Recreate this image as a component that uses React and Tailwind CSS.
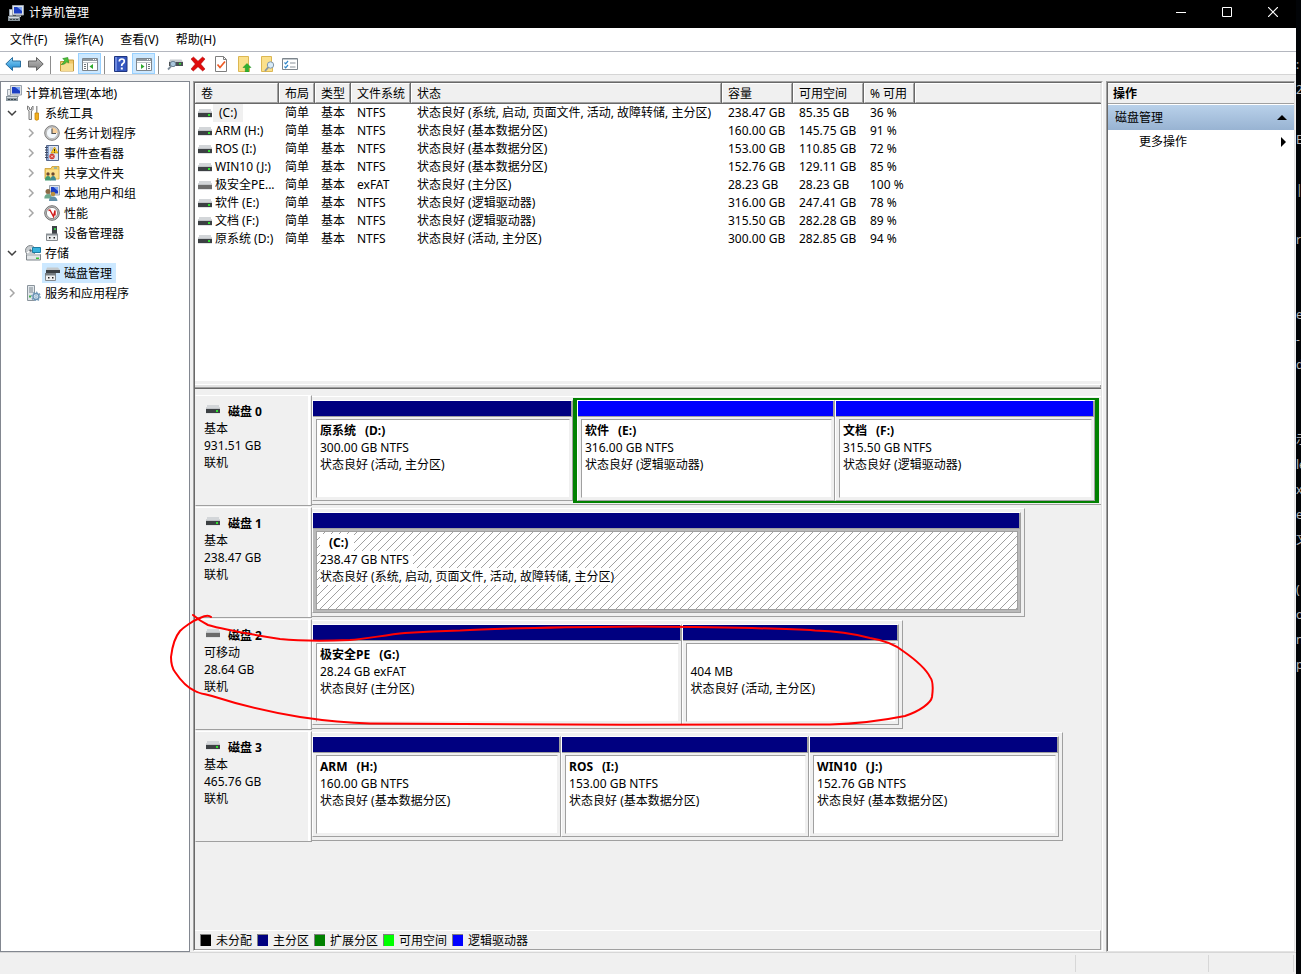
import { useState } from 'react';

const MENUS = ['文件(F)', '操作(A)', '查看(V)', '帮助(H)'];

const COLUMNS = [
  { label: '卷', width: 'w-[84px]' },
  { label: '布局', width: 'w-[36px]' },
  { label: '类型', width: 'w-[36px]' },
  { label: '文件系统', width: 'w-[60px]' },
  { label: '状态', width: 'w-[311px]' },
  { label: '容量', width: 'w-[71px]' },
  { label: '可用空间', width: 'w-[71px]' },
  { label: '% 可用', width: 'w-[51px]' },
];

const VOLUMES = [
  { name: '(C:)', fs: 'NTFS', status: '状态良好 (系统, 启动, 页面文件, 活动, 故障转储, 主分区)', size: '238.47 GB', free: '85.35 GB', pct: '36 %' },
  { name: 'ARM (H:)', fs: 'NTFS', status: '状态良好 (基本数据分区)', size: '160.00 GB', free: '145.75 GB', pct: '91 %' },
  { name: 'ROS (I:)', fs: 'NTFS', status: '状态良好 (基本数据分区)', size: '153.00 GB', free: '110.85 GB', pct: '72 %' },
  { name: 'WIN10 (J:)', fs: 'NTFS', status: '状态良好 (基本数据分区)', size: '152.76 GB', free: '129.11 GB', pct: '85 %' },
  { name: '极安全PE...', fs: 'exFAT', status: '状态良好 (主分区)', size: '28.23 GB', free: '28.23 GB', pct: '100 %', removable: true },
  { name: '软件 (E:)', fs: 'NTFS', status: '状态良好 (逻辑驱动器)', size: '316.00 GB', free: '247.41 GB', pct: '78 %' },
  { name: '文档 (F:)', fs: 'NTFS', status: '状态良好 (逻辑驱动器)', size: '315.50 GB', free: '282.28 GB', pct: '89 %' },
  { name: '原系统 (D:)', fs: 'NTFS', status: '状态良好 (活动, 主分区)', size: '300.00 GB', free: '282.85 GB', pct: '94 %' },
];

// share = relative width of a partition, width = width of the whole disk in %
const DISKS = [
  {
    name: '磁盘 0', type: '基本', size: '931.51 GB', width: 100,
    parts: [{ title: '原系统', letter: '(D:)', size: '300.00 GB NTFS', status: '状态良好 (活动, 主分区)', share: 261 }],
    extended: [
      { title: '软件', letter: '(E:)', size: '316.00 GB NTFS', status: '状态良好 (逻辑驱动器)', share: 258 },
      { title: '文档', letter: '(F:)', size: '315.50 GB NTFS', status: '状态良好 (逻辑驱动器)', share: 260 },
    ],
  },
  {
    name: '磁盘 1', type: '基本', size: '238.47 GB', width: 90.4,
    parts: [{ title: '', letter: '(C:)', size: '238.47 GB NTFS', status: '状态良好 (系统, 启动, 页面文件, 活动, 故障转储, 主分区)', share: 709, selected: true }],
  },
  {
    name: '磁盘 2', type: '可移动', size: '28.64 GB', width: 74.9, removable: true,
    parts: [
      { title: '极安全PE', letter: '(G:)', size: '28.24 GB exFAT', status: '状态良好 (主分区)', share: 371 },
      { title: '', letter: '', size: '404 MB', status: '状态良好 (活动, 主分区)', share: 216 },
    ],
  },
  {
    name: '磁盘 3', type: '基本', size: '465.76 GB', width: 95.2,
    parts: [
      { title: 'ARM', letter: '(H:)', size: '160.00 GB NTFS', status: '状态良好 (基本数据分区)', share: 249 },
      { title: 'ROS', letter: '(I:)', size: '153.00 GB NTFS', status: '状态良好 (基本数据分区)', share: 248 },
      { title: 'WIN10', letter: '(J:)', size: '152.76 GB NTFS', status: '状态良好 (基本数据分区)', share: 250 },
    ],
  },
];

const LEGEND = [
  { label: '未分配', color: 'bg-black' },
  { label: '主分区', color: 'bg-[#000080]' },
  { label: '扩展分区', color: 'bg-[#008000]' },
  { label: '可用空间', color: 'bg-[#00ff00]' },
  { label: '逻辑驱动器', color: 'bg-[#0000ff]' },
];

// Slice of the console window that sits behind this one
const BEHIND = [':', '2', '', 'E', '', '|', '', 'r', '', '', 'e', '-', 'd', '', '', '示', 'le', 'x', 'e', '文', '', '(', 'o', 'n', 'p'];

/* ---------- icons ---------- */

function Icon({ children, size = 16 }) {
  return (
    <svg width={size} height={size} viewBox="0 0 16 16" className="shrink-0" aria-hidden="true">
      {children}
    </svg>
  );
}

function ComputerIcon() {
  return (
    <Icon>
      <path d="M4.5 .5h11v9.500h-11z" fill="#dfe3e8" stroke="#9aa3ad" />
      <path d="M6 2h8v6.500H6z" fill="#1c3fc4" />
      <path d="M9 2h5v4z" fill="#7fa6f2" />
      <path d="M8 10.500h5V12H8z" fill="#b5bcc4" />
      <path d="M1.500 4.500h3v6h-3z" fill="#e9ecef" stroke="#9aa3ad" />
      <path d="M0 11h12v5H0z" fill="#8b979f" />
      <path d="M1 12h10v1H1z" fill="#d8dde1" />
      <path d="M2 14h2v1H2zM5 14h2v1H5zM8 14h2v1H8z" fill="#3b454c" />
    </Icon>
  );
}

function ToolsIcon() {
  return (
    <Icon>
      <path d="M2.500 1v3.500L4 6v8.500h2.500V6L8 4.500V1L6.500 2.500v2h-2v-2z" fill="#e6e6e6" stroke="#7d7d7d" />
      <path d="M11 1h1.500v7H11z" fill="#9b9b9b" />
      <path d="M10 8h3.500v6.500q-1.800 1.500-3.500 0z" fill="#f2b01e" stroke="#c98508" strokeWidth=".8" />
    </Icon>
  );
}

function ClockIcon() {
  return (
    <Icon>
      <circle cx="8" cy="8" r="7.300" fill="#c9c9c9" stroke="#7c7c7c" />
      <circle cx="8" cy="8" r="5.600" fill="#f3f8fc" stroke="#a5a5a5" strokeWidth=".6" />
      <path d="M8 8V2.400A5.600 5.600 0 0 1 13.600 8z" fill="#f7cf9a" />
      <path d="M8 3.500V8.500h4" fill="none" stroke="#555" strokeWidth="1.200" />
    </Icon>
  );
}

function EventIcon() {
  return (
    <Icon>
      <path d="M2.500 .5h12v15h-12z" fill="#8ea6cf" stroke="#56688c" />
      <path d="M5 1h9v14H5z" fill="#dfe6f4" />
      <path d="M6 9h3M6 11h3M6 13h4M6 3h3M6 5h3" stroke="#9fb0d0" />
      <path d="M1 2.500h3M1 5h3M1 7.500h3M1 10h3M1 12.500h3" stroke="#3f4a63" />
      <path d="M10.500 2l3.500 6H7z" fill="#ffcc22" stroke="#b88b00" strokeWidth=".6" />
      <path d="M10.500 4v2.200M10.500 6.800v.8" stroke="#222" />
      <circle cx="8" cy="11.500" r="2.700" fill="#d63a2f" />
      <path d="M7 10.500l2 2M9 10.500l-2 2" stroke="#fff" strokeWidth=".8" />
    </Icon>
  );
}

function SharedIcon() {
  return (
    <Icon>
      <path d="M1 3.500h6l1-2h7v12.500H1z" fill="#f4cf66" stroke="#c99a2e" strokeWidth=".8" />
      <path d="M2 5h12.500v8.500H2z" fill="#fbe08b" />
      <path d="M10 2.500h3v1h-3z" fill="#4d9fd6" />
      <circle cx="4" cy="9" r="1.700" fill="#6b4a30" />
      <circle cx="9" cy="9" r="1.700" fill="#6b4a30" />
      <path d="M1 15.500q0-4.500 3-4.500t3 4.500z" fill="#3f9a70" />
      <path d="M6.500 15.500q0-4.500 2.700-4.500t2.800 4.500z" fill="#3f8a90" />
    </Icon>
  );
}

function UsersIcon() {
  return (
    <Icon>
      <path d="M5.500 .5h10v9.500h-10z" fill="#dfe3e8" stroke="#9aa3ad" />
      <path d="M7 2h7v6.500H7z" fill="#1c3fc4" />
      <path d="M9.500 2H14v4z" fill="#7fa6f2" />
      <circle cx="4" cy="6.500" r="2.500" fill="#8b6a45" />
      <path d="M.3 13.500q0-4.500 3.700-4.500t4 4.500z" fill="#6fa98d" />
      <circle cx="9" cy="9" r="2.300" fill="#b98f3f" />
      <path d="M5 16q0-4.500 4-4.500t4.500 4.500z" fill="#5f8fa8" />
    </Icon>
  );
}

function PerfIcon() {
  return (
    <Icon>
      <circle cx="8" cy="8" r="7.300" fill="#c4c4c4" stroke="#6e6e6e" />
      <circle cx="8" cy="8" r="5.600" fill="#fff" stroke="#777" strokeWidth=".8" />
      <path d="M4.500 5.500L6 5l3.500 6.500L11 5.500v5" fill="none" stroke="#d01c1c" strokeWidth="1.400" />
    </Icon>
  );
}

function DeviceIcon() {
  return (
    <Icon>
      <path d="M8 1h5v8H8z" fill="#3e4347" />
      <path d="M10 3h2v2h-2z" fill="#38c44a" />
      <path d="M2.500 9.500h11v6h-11z" fill="#eceeef" stroke="#84898d" />
      <path d="M2 8.500h12v2H2z" fill="#8c9297" />
      <path d="M5 12h1.500v1.500H5zM9.500 12H11v1.500H9.500z" fill="#222" />
    </Icon>
  );
}

function StorageIcon() {
  return (
    <Icon>
      <circle cx="5.500" cy="5.500" r="5" fill="#c8cccf" stroke="#80868a" />
      <path d="M5.500 5.500L9 2M5.500 5.500L2 8" stroke="#fff" strokeWidth="1.500" />
      <circle cx="5.500" cy="5.500" r="1.200" fill="#5f666b" />
      <path d="M7.500 2.500h8v5h-8z" fill="#39b3dd" stroke="#1d7ca3" />
      <path d="M1.500 9.500h14v5.500h-14z" fill="#e3e6e8" stroke="#7d8489" />
      <path d="M2 9h13v2H2z" fill="#c3c8cb" />
      <path d="M11 12.500h3V14h-3z" fill="#3bc23b" />
    </Icon>
  );
}

function DiskMgmtIcon() {
  return (
    <Icon>
      <path d="M3 2.500h11l2 2.500H2z" fill="#c4c9cc" />
      <path d="M2 5h14v3H2z" fill="#3b4044" />
      <path d="M1.500 9.500h10v6h-10z" fill="#f0f1f2" stroke="#84898d" />
      <path d="M1 8h11v2.500H1z" fill="#777e83" />
      <path d="M4 12h1.500v1.500H4zM8 12h1.500v1.500H8z" fill="#222" />
    </Icon>
  );
}

function ServicesIcon() {
  return (
    <Icon>
      <path d="M2.500 .5h7v15h-7z" fill="#e2e7eb" stroke="#8a949c" />
      <path d="M4 3h4M4 5h4M4 7h4" stroke="#7b868f" />
      <path d="M4 10.500h2v2H4z" fill="#45b04c" />
      <circle cx="11" cy="11.500" r="3" fill="#d9e8f4" stroke="#6a93b4" strokeWidth="1.500" />
      <circle cx="11" cy="11.500" r="4.300" fill="none" stroke="#6a93b4" strokeWidth="1.200" strokeDasharray="1.500 1.800" />
      <circle cx="11" cy="11.500" r="1" fill="#fff" stroke="#6a93b4" strokeWidth=".6" />
    </Icon>
  );
}

function DriveIcon({ removable }) {
  return (
    <svg width="14" height="9" viewBox="0 0 14 9" className="shrink-0" shapeRendering="crispEdges" aria-hidden="true">
      <path d="M1 0h12l1 4H0z" fill="#d3d6d9" />
      <path d="M0 4h14v4H0z" fill={removable ? '#6b6b6b' : '#3c4043'} />
      <path d="M0 8h14v1H0z" fill="#e1e2e4" />
      <path d="M0 3h14v1H0z" fill="#c0c3c6" />
      {!removable && <path d="M10 5h2v2h-2z" fill="#2fe02f" />}
    </svg>
  );
}

function ArrowIcon({ flip, from, to, stroke }) {
  const id = flip ? 'arrow-next' : 'arrow-back';
  return (
    <Icon>
      <defs>
        <linearGradient id={id} x1="0" y1="0" x2="0" y2="1">
          <stop offset="0" stopColor={from} />
          <stop offset="1" stopColor={to} />
        </linearGradient>
      </defs>
      <path
        d="M.8 8L7.500 1.500V5h8v6h-8v3.500z"
        transform={flip ? 'matrix(-1 0 0 1 16 0)' : undefined}
        fill={`url(#${id})`}
        stroke={stroke}
        strokeLinejoin="round"
      />
    </Icon>
  );
}

function FolderUpIcon() {
  return (
    <Icon>
      <path d="M1.500 5.500h5l1-1.500h7v11h-13z" fill="#f0c766" stroke="#c49a3a" />
      <path d="M2 7.500h12V15H2z" fill="#f8dd92" />
      <path d="M4 10.500q3.500-1.500 3.500-5H9.800L6.500 1.200 2.500 4.500 5 5q.5 3-1 5.500z" transform="rotate(28 7 6)" fill="#4ec23c" stroke="#2f8f23" strokeWidth=".6" />
    </Icon>
  );
}

function PaneIcon({ right }) {
  return (
    <Icon>
      <path d="M.5 2.500h15v12H.5z" fill="#fff" stroke="#7d858c" />
      <path d="M1 3h14v2H1z" fill="#8f979e" />
      <path d="M11 3.500h1M13 3.500h1" stroke="#fff" />
      <path d="M1 6.500h14" stroke="#c2c8cd" />
      <path d={right ? 'M10.500 7v7' : 'M5.500 7v7'} stroke="#7d858c" />
      <path d={right ? 'M12 8.500h2M12 10.500h2M12 12.500h2' : 'M2 8.500h2M2 10.500h2M2 12.500h2'} stroke="#6c757c" />
      <path d={right ? 'M5 8l3.500 2.500L5 13z' : 'M11 8l-3.500 2.500L11 13z'} fill="#2eaa2e" />
    </Icon>
  );
}

function HelpIcon() {
  return (
    <Icon>
      <path d="M1.500 .5h12.500v15H1.500z" fill="#3557c0" stroke="#1e357f" />
      <path d="M2 1h2v14H2z" fill="#6f8be0" />
      <path d="M6.300 5.500q0-2.500 2.500-2.500t2.500 2.300q0 1.500-1.400 2.300T8.700 10" fill="none" stroke="#fff" strokeWidth="1.700" />
      <path d="M7.800 11.500h2v2h-2z" fill="#fff" />
    </Icon>
  );
}

function RescanIcon() {
  return (
    <Icon>
      <path d="M3 3.500h11.500L16 6H2z" fill="#c5cacd" />
      <path d="M2 6h14v4H2z" fill="#4a5054" />
      <path d="M12 7h2v1.500h-2z" fill="#2fe02f" />
      <circle cx="6" cy="8" r="2.700" fill="#a9c6dc" stroke="#6f8496" />
      <path d="M4.200 10.200L1 13.500" stroke="#7c8b98" strokeWidth="1.800" />
    </Icon>
  );
}

function DeleteIcon() {
  return (
    <Icon>
      <path d="M3.500 1L8 5.200 12.500 1 15 3 10.700 8 15 13l-2.300 2L8 10.700 3.300 15 1 13l4.300-5L1 3z" fill="#e00b0b" stroke="#a30000" strokeWidth=".5" />
    </Icon>
  );
}

function CheckDocIcon() {
  return (
    <Icon>
      <path d="M2.500 .5h8l3 3v12h-11z" fill="#fff" stroke="#7e7e7e" />
      <path d="M10.500 .5v3h3" fill="none" stroke="#7e7e7e" />
      <path d="M4.500 8.500l2.500 3 5-6" fill="none" stroke="#ee5a24" strokeWidth="1.700" />
    </Icon>
  );
}

function FolderNewIcon() {
  return (
    <Icon>
      <path d="M2.500 .5h10v10h1v5h-11z" fill="#fbe08b" stroke="#dcb752" />
      <path d="M11 7.500l4 4h-2.300V16H9.300v-4.500H7z" fill="#2fb22f" stroke="#1c8a1c" strokeWidth=".5" />
    </Icon>
  );
}

function FolderFindIcon() {
  return (
    <Icon>
      <path d="M2.500 .5h10v10h1v5h-11z" fill="#fbe08b" stroke="#dcb752" />
      <circle cx="11.500" cy="9" r="3.200" fill="#d8ebf8" stroke="#8296a6" />
      <path d="M9.200 11.300L6 15" stroke="#8a97a1" strokeWidth="1.800" />
    </Icon>
  );
}

function OptionsIcon() {
  return (
    <Icon>
      <path d="M.5 2.500h15v11H.5z" fill="#fff" stroke="#7d858c" />
      <path d="M1 3h14v1H1z" fill="#c2c8cd" />
      <path d="M2.500 6.500l1.200 1.300L6 5M2.500 10.500l1.200 1.300L6 9" fill="none" stroke="#2f86c9" strokeWidth="1.200" />
      <path d="M8 7h5.500M8 11h5.500" stroke="#8a9299" strokeWidth="1.200" />
    </Icon>
  );
}

function Chevron({ open }) {
  return (
    <svg width="10" height="10" viewBox="0 0 10 10" className="shrink-0" aria-hidden="true">
      <path
        d={open ? 'M1 3l4 4 4-4' : 'M3 1l4 4-4 4'}
        fill="none"
        stroke={open ? '#404040' : '#a6a6a6'}
        strokeWidth="1.500"
      />
    </svg>
  );
}

/* ---------- left tree ---------- */

const TREE = [
  { label: '任务计划程序', icon: ClockIcon, expandable: true },
  { label: '事件查看器', icon: EventIcon, expandable: true },
  { label: '共享文件夹', icon: SharedIcon, expandable: true },
  { label: '本地用户和组', icon: UsersIcon, expandable: true },
  { label: '性能', icon: PerfIcon, expandable: true },
  { label: '设备管理器', icon: DeviceIcon },
];

function TreeItem({ icon: Glyph, label, level, open, expandable, selected, onClick }) {
  return (
    <li className={`flex h-5 items-center ${level === 2 ? 'pl-[25px]' : level === 1 ? 'pl-[6px]' : 'pl-[5px]'}`}>
      {level > 0 && <span className="flex w-[18px] shrink-0">{expandable && <Chevron open={open} />}</span>}
      <button
        type="button"
        onClick={onClick}
        className={`flex h-5 items-center gap-1 pr-1 ${selected ? '-ml-0.5 bg-[#cce8ff] pl-0.5' : ''}`}
      >
        <Glyph />
        <span className="pt-px">{label}</span>
      </button>
    </li>
  );
}

function Sidebar({ selected, onSelect }) {
  return (
    <nav className="w-[190px] shrink-0 border border-[#828790] bg-white pt-px">
      <ul>
        <TreeItem level={0} icon={ComputerIcon} label="计算机管理(本地)" />
        <TreeItem level={1} icon={ToolsIcon} label="系统工具" open expandable />
        {TREE.map((t) => (
          <TreeItem key={t.label} level={2} {...t} selected={selected === t.label} onClick={() => onSelect(t.label)} />
        ))}
        <TreeItem level={1} icon={StorageIcon} label="存储" open expandable />
        <TreeItem
          level={2}
          icon={DiskMgmtIcon}
          label="磁盘管理"
          selected={selected === '磁盘管理'}
          onClick={() => onSelect('磁盘管理')}
        />
        <TreeItem level={1} icon={ServicesIcon} label="服务和应用程序" expandable />
      </ul>
    </nav>
  );
}

/* ---------- top bars ---------- */

function TitleBar() {
  const button = 'flex w-[46px] items-center justify-center';
  return (
    <header className="flex h-7 bg-black text-white">
      <div className="flex flex-1 items-center gap-[5px] pb-0.5 pl-2">
        <ComputerIcon />
        <h1>计算机管理</h1>
      </div>
      <div className="flex pb-1">
        <button type="button" className={button} aria-label="最小化">
          <svg width="10" height="10" viewBox="0 0 10 10"><path d="M0 5.500h10" stroke="#fff" /></svg>
        </button>
        <button type="button" className={button} aria-label="最大化">
          <svg width="10" height="10" viewBox="0 0 10 10"><path d="M.5 .5h9v9h-9z" fill="none" stroke="#fff" /></svg>
        </button>
        <button type="button" className={button} aria-label="关闭">
          <svg width="10" height="10" viewBox="0 0 10 10"><path d="M0 0l10 10M10 0L0 10" stroke="#fff" strokeWidth="1.200" /></svg>
        </button>
      </div>
    </header>
  );
}

function ToolButton({ label, active, children }) {
  return (
    <button
      type="button"
      aria-label={label}
      className={`flex h-[21px] w-[23px] items-center justify-center border ${
        active ? 'border-[#99d1ff] bg-[#cce8ff]' : 'border-transparent'
      }`}
    >
      {children}
    </button>
  );
}

function Separator() {
  return <span className="ml-[3px] mr-1 h-[18px] w-px bg-[#8d8d8d]" />;
}

function Toolbar() {
  return (
    <div className="flex h-[23px] items-end border-b border-[#d5d5d5] bg-white pl-px">
      <ToolButton label="后退"><ArrowIcon from="#8fd6f8" to="#1583cf" stroke="#2a6f9f" /></ToolButton>
      <ToolButton label="前进"><ArrowIcon flip from="#bdbdbd" to="#7f7f7f" stroke="#636363" /></ToolButton>
      <Separator />
      <ToolButton label="上移一级"><FolderUpIcon /></ToolButton>
      <ToolButton label="显示控制台树" active><PaneIcon /></ToolButton>
      <Separator />
      <ToolButton label="帮助"><HelpIcon /></ToolButton>
      <ToolButton label="显示操作窗格" active><PaneIcon right /></ToolButton>
      <Separator />
      <ToolButton label="重新扫描"><RescanIcon /></ToolButton>
      <ToolButton label="删除"><DeleteIcon /></ToolButton>
      <ToolButton label="属性"><CheckDocIcon /></ToolButton>
      <ToolButton label="打开"><FolderNewIcon /></ToolButton>
      <ToolButton label="浏览"><FolderFindIcon /></ToolButton>
      <ToolButton label="选项"><OptionsIcon /></ToolButton>
    </div>
  );
}

/* ---------- volume list ---------- */

function VolumeTable() {
  const head = 'h-[21px] border-b border-b-[#696969] bg-[#f0f0f0] p-0 text-left font-normal';
  return (
    <table className="w-full table-fixed border-separate border-spacing-0 whitespace-nowrap">
      <thead>
        <tr>
          {COLUMNS.map((c) => (
            <th key={c.label} className={`${head} ${c.width} border-r border-r-[#696969]`}>
              <div className="h-5 border border-b-[#a0a0a0] border-l-white border-r-[#a0a0a0] border-t-white pl-[5px] leading-5">
                {c.label}
              </div>
            </th>
          ))}
          <th className={head} aria-label="空">
            <div className="h-5 border border-b-[#a0a0a0] border-l-white border-r-[#e3e3e3] border-t-white" />
          </th>
        </tr>
      </thead>
      <tbody>
        {VOLUMES.map((v, i) => (
          <tr key={v.name} className="h-[18px] leading-[18px]">
            <td className="p-0">
              <div className="flex items-center pl-[3px]">
                <DriveIcon removable={v.removable} />
                <span className={i === 0 ? 'ml-px bg-[#f0f0f0] px-[6px]' : 'ml-[3px]'}>{v.name}</span>
              </div>
            </td>
            <td className="p-0 pl-[6px]">简单</td>
            <td className="p-0 pl-[6px]">基本</td>
            <td className="p-0 pl-[6px]">{v.fs}</td>
            <td className="p-0 pl-[6px]">{v.status}</td>
            <td className="p-0 pl-[6px]">{v.size}</td>
            <td className="p-0 pl-[6px]">{v.free}</td>
            <td className="p-0 pl-[6px]">{v.pct}</td>
            <td className="p-0" />
          </tr>
        ))}
      </tbody>
    </table>
  );
}

/* ---------- graphical view ---------- */

function Hatch() {
  return (
    <svg className="absolute inset-0 h-full w-full" aria-hidden="true">
      <defs>
        <pattern id="hatch" width="8" height="8" patternUnits="userSpaceOnUse">
          <path
            d="M7 0h1v1H7zM6 1h1v1H6zM5 2h1v1H5zM4 3h1v1H4zM3 4h1v1H3zM2 5h1v1H2zM1 6h1v1H1zM0 7h1v1H0z"
            fill="#a0a0a0"
            shapeRendering="crispEdges"
          />
        </pattern>
      </defs>
      <rect width="100%" height="100%" fill="url(#hatch)" />
    </svg>
  );
}

function Partition({ part, logical }) {
  return (
    <div
      className="flex min-w-0 flex-col border border-b-[#a0a0a0] border-l-white border-r-[#a0a0a0] border-t-white"
      style={{ flex: `${part.share} 1 0px` }}
    >
      <div className={`h-4 border-b border-r border-[#a0a0a0] ${logical ? 'bg-[#0000ff]' : 'bg-[#000080]'}`} />
      <div className={`flex flex-1 py-0.5 pl-[3px] pr-0.5 ${part.selected ? 'bg-[#b9b9b9]' : 'bg-[#f0f0f0]'}`}>
        <div
          className={`relative flex-1 overflow-hidden whitespace-nowrap border bg-white pl-[3px] pt-0.5 leading-[17px] ${
            part.selected ? 'border-[#a0a0a0]' : 'border-b-[#f0f0f0] border-l-[#a0a0a0] border-r-[#f0f0f0] border-t-[#a0a0a0]'
          }`}
        >
          {part.selected && <Hatch />}
          <p className="relative h-[17px] font-bold">
            <span className="inline-block bg-white pr-1.5">
              <span>{part.title}</span>
              <span className="ml-[9px]">{part.letter}</span>
            </span>
          </p>
          <p className="relative h-[17px]"><span className="inline-block bg-white pr-1">{part.size}</span></p>
          <p className="relative h-[17px]"><span className="inline-block bg-white">{part.status}</span></p>
        </div>
      </div>
    </div>
  );
}

function DiskRow({ disk }) {
  return (
    <section className="mb-px flex h-[111px]">
      <div className="w-[117px] shrink-0 border border-b-[#a0a0a0] border-l-transparent border-r-[#a0a0a0] border-t-white">
        <div className="mr-px h-full border-r-2 border-white pl-2 pt-[7px] leading-[17px]">
          <div className="flex items-start gap-2 pl-0.5">
            <span className="pt-0.5"><DriveIcon removable={disk.removable} /></span>
            <h2 className="font-bold">{disk.name}</h2>
          </div>
          <p>{disk.type}</p>
          <p>{disk.size}</p>
          <p>联机</p>
        </div>
      </div>
      <div className="flex min-w-0 flex-1 py-px">
        <div
          className={`flex border-b border-t border-b-[#a0a0a0] border-t-white py-px ${
            disk.extended ? 'pr-0.5' : 'border-r border-r-[#a0a0a0] pr-[3px]'
          }`}
          style={{ width: `${disk.width}%` }}
        >
          <div className="my-0.5 flex min-w-0" style={{ flex: `${disk.parts.reduce((n, p) => n + p.share, 0)} 1 0px` }}>
            {disk.parts.map((p) => (
              <Partition key={p.size} part={p} />
            ))}
          </div>
          {disk.extended && (
            <div
              className="flex min-w-0 border-x-4 border-y-2 border-[#008000]"
              style={{ flex: `${disk.extended.reduce((n, p) => n + p.share, 0)} 1 0px` }}
            >
              {disk.extended.map((p) => (
                <Partition key={p.size} part={p} logical />
              ))}
            </div>
          )}
        </div>
      </div>
    </section>
  );
}

function Legend() {
  return (
    <ul className="flex h-5 items-center gap-[5px] border-b border-r border-t border-b-[#a0a0a0] border-r-[#a0a0a0] border-t-white pl-[5px]">
      {LEGEND.map((l) => (
        <li key={l.label} className="flex items-center gap-[5px]">
          <span className={`h-3 w-[11px] border-l border-t border-[#808080] ${l.color}`} />
          <span className="pt-px">{l.label}</span>
        </li>
      ))}
    </ul>
  );
}

/* ---------- right pane ---------- */

function ActionsPane() {
  return (
    <aside className="mr-px flex w-[189px] shrink-0 border border-b-[#e3e3e3] border-l-[#a0a0a0] border-r-[#e3e3e3] border-t-[#a0a0a0]">
      <div className="flex-1 border-l border-t border-[#696969] bg-white">
        <h2 className="mt-px h-5 border-b border-[#a0a0a0] bg-[#f0f0f0] pl-[5px] font-bold leading-5">操作</h2>
        <button
          type="button"
          className="mt-px flex h-[25px] w-full items-center justify-between bg-linear-to-b from-[#b9d1ea] to-[#98b3d2] px-[7px]"
        >
          磁盘管理
          <svg width="10" height="5" viewBox="0 0 10 5" aria-hidden="true"><path d="M0 5l5-5 5 5z" /></svg>
        </button>
        <button type="button" className="flex h-6 w-full items-center justify-between pl-[31px] pr-2">
          更多操作
          <svg width="5" height="10" viewBox="0 0 5 10" aria-hidden="true"><path d="M0 0l5 5-5 5z" /></svg>
        </button>
      </div>
    </aside>
  );
}

// Freehand circle around disk 2
function RedMark() {
  return (
    <svg className="pointer-events-none absolute left-0 top-0" width="960" height="740" viewBox="0 0 960 740" aria-hidden="true">
      <path
        d="M211 617Q208 614 200 618C192 621 183 628 180 631C175 637 172 648 171 657C171 664 172 668 175 672C181 681 188 688 195 691C200 694 206 694 212 696C240 705 275 713 300 717C320 720 345 723 370 723.500C460 724.500 700 725.500 830 724.500C850 724 880 721 905 716C920 711 931 703 932 697C933 690 934 682 930 677C925 667 913 658 903 651C893 643 882 640 870 638C855 634 835 631 815 630.500C780 628 700 627 640 626.500C580 627 500 628 460 630.500C440 631 420 632 405 633C385 635 365 639 350 640C325 641 300 641 280 639C255 635 225 630 208 625Q200 621 193 615"
        fill="none"
        stroke="#ff0000"
        strokeWidth="2"
        strokeLinecap="round"
        strokeLinejoin="round"
      />
    </svg>
  );
}

export default function App() {
  const [selected, setSelected] = useState('磁盘管理');

  return (
    <div className="relative flex h-screen overflow-hidden bg-[#020407] font-['Noto_Sans','Noto_Sans_CJK_SC',sans-serif] text-xs leading-4 text-black">
      <div className="flex min-w-0 flex-1 flex-col bg-[#f0f0f0]">
        <TitleBar />

        <div className="flex h-6 items-center gap-[17px] border-b border-[#b4b7bf] bg-white pl-[10px] pt-px">
          {MENUS.map((m) => (
            <button key={m} type="button">{m}</button>
          ))}
        </div>

        <Toolbar />

        <main className="flex min-h-0 flex-1 pt-[6px]">
          <Sidebar selected={selected} onSelect={setSelected} />

          <div className="mx-[3px] mb-px flex min-w-0 flex-1 border border-b-white border-l-[#a0a0a0] border-r-white border-t-[#a0a0a0]">
            <div className="flex min-w-0 flex-1 flex-col border border-b-0 border-l-[#696969] border-r-[#e3e3e3] border-t-[#696969]">
              <div className="h-[298px] shrink-0 bg-white">
                <VolumeTable />
              </div>
              <div className="mt-[3px] h-[5px] shrink-0 border-b border-t border-b-[#696969] border-t-white">
                <div className="h-[3px] border-b border-r border-[#a0a0a0] bg-[#e3e3e3]" />
              </div>

              <div className="flex-1 pt-[6px]">
                {DISKS.map((d) => (
                  <DiskRow key={d.name} disk={d} />
                ))}
              </div>

              <Legend />
            </div>
          </div>

          <ActionsPane />
        </main>

        <footer className="flex h-[22px] shrink-0 justify-end border-t border-[#d7d7d7] py-0.5 pr-0.5">
          <div className="w-[133px] border-l border-[#d7d7d7]" />
          <div className="w-[86px] border-x border-[#d7d7d7]" />
        </footer>
      </div>

      <div className="w-[5px] shrink-0 overflow-hidden pt-[52px] leading-[25px] text-[#b8b8b8]" aria-hidden="true">
        {BEHIND.map((t, i) => (
          <div key={i} className="h-[25px]">{t}</div>
        ))}
      </div>

      <RedMark />
    </div>
  );
}
